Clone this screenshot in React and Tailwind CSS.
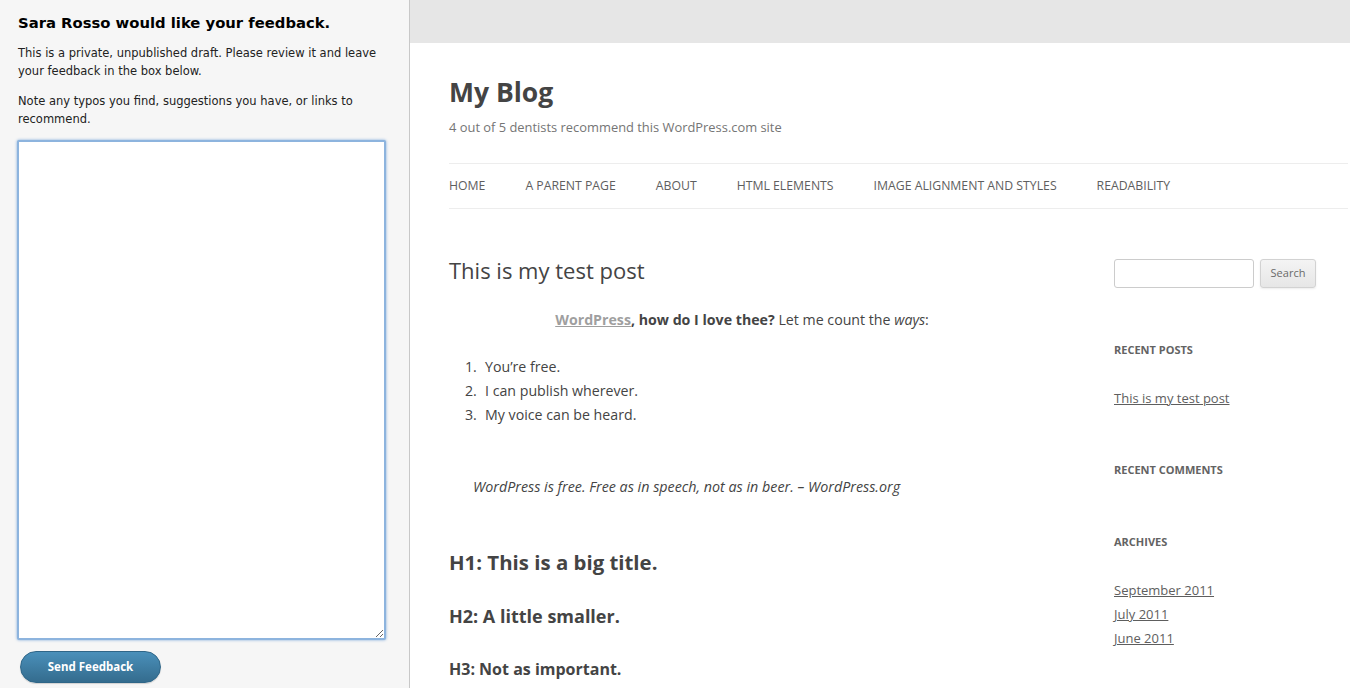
import React from 'react';

const navItems = ['Home', 'A Parent Page', 'About', 'HTML Elements', 'Image Alignment and Styles', 'Readability'];
const archives = ['September 2011', 'July 2011', 'June 2011'];

function FeedbackPanel() {
    return (
        <aside className="w-[410px] shrink-0 h-full bg-[#f6f6f6] border-r border-[#c8c8c8] flex flex-col text-black" style={{ fontFamily: '"DejaVu Sans", Verdana, sans-serif' }}>
            <div className="pl-[18px] pr-4 pt-[12px]">
                <h2 className="text-[14.8px] font-bold leading-[22px]">Sara Rosso would like your feedback.</h2>
                <p className="mt-[10px] text-[11.5px] leading-[18px] text-[#222]">This is a private, unpublished draft. Please review it and leave your feedback in the box below.</p>
                <p className="mt-[12px] text-[11.5px] leading-[18px] text-[#222]">Note any typos you find, suggestions you have, or links to recommend.</p>
            </div>
            <div className="pl-[17px] pr-[23px] mt-[12px]">
                <textarea className="block w-full h-[500px] bg-white border-2 border-[#8db4de] rounded-[2px] shadow-[0_0_3px_#7aa7d9] outline-none resize" />
            </div>
            <div className="pl-[20px] mt-[11px]">
                <button className="w-[141px] h-[32px] rounded-full bg-gradient-to-b from-[#4a90ba] to-[#346c8e] border border-[#2f6688] text-white text-[11.5px] font-bold shadow-[0_1px_1px_rgba(0,0,0,0.15)]" style={{ fontFamily: '"Noto Sans", "Open Sans", sans-serif' }}>
                    Send Feedback
                </button>
            </div>
        </aside>
    );
}

function Sidebar() {
    return (
        <div className="w-[236px] shrink-0 pt-[50px]">
            <div className="flex gap-[6px]">
                <input className="w-[140px] h-[29px] border border-[#ccc] rounded-[3px] bg-white" />
                <button className="w-[56px] h-[29px] border border-[#d2d2d2] rounded-[3px] bg-gradient-to-b from-[#f4f4f4] to-[#e6e6e6] text-[11px] text-[#6a6a6a] shadow-[0_1px_2px_rgba(64,64,64,0.1)]">Search</button>
            </div>
            <h3 className="mt-[53px] text-[11px] font-bold uppercase text-[#636363] leading-[18px]">Recent Posts</h3>
            <ul className="mt-[27px] text-[13px] leading-[24px]">
                <li><a className="underline text-[#5e5e5e]">This is my test post</a></li>
            </ul>
            <h3 className="mt-[51px] text-[11px] font-bold uppercase text-[#636363] leading-[18px]">Recent Comments</h3>
            <h3 className="mt-[54px] text-[11px] font-bold uppercase text-[#636363] leading-[18px]">Archives</h3>
            <ul className="mt-[27px] text-[13px] leading-[24px]">
                {archives.map(a => (
                    <li key={a}><a className="underline text-[#5e5e5e]">{a}</a></li>
                ))}
            </ul>
        </div>
    );
}

function BlogPreview() {
    return (
        <main className="flex-1 h-full overflow-hidden bg-white flex flex-col" style={{ fontFamily: '"Open Sans", "Noto Sans", sans-serif' }}>
            <div className="h-[43px] shrink-0 bg-[#e6e6e6]" />
            <div className="pl-[39px] pr-[2px]">
                {/* Header */}
                <h1 className="mt-[31px] text-[26.5px] font-bold leading-[36px] text-[#444]">My Blog</h1>
                <p className="mt-[7px] text-[12.9px] leading-[20px] text-[#757575]">4 out of 5 dentists recommend this WordPress.com site</p>

                {/* Nav */}
                <nav className="mt-[26px] border-t border-b border-[#ededed] h-[46px] flex items-center gap-[40px]">
                    {navItems.map(item => (
                        <a key={item} className="text-[12.25px] uppercase text-[#5e5e5e] leading-none">{item}</a>
                    ))}
                </nav>

                <div className="flex">
                    {/* Post */}
                    <article className="w-[665px] shrink-0 pt-[46px] text-[#444]">
                        <h2 className="text-[22px] leading-[30px] font-normal text-[#444]">This is my test post</h2>
                        <div className="w-[586px]">
                            <p className="mt-[23px] text-[14.2px] leading-[24px] text-center">
                                <a className="underline font-bold text-[#9f9f9f]">WordPress</a><strong>, how do I love thee?</strong> Let me count the <em>ways</em>:
                            </p>
                            <ol className="mt-[23px] pl-[16px] text-[14.2px] leading-[24px] list-none">
                                <li><span className="inline-block w-[20px]">1.</span>You’re free.</li>
                                <li><span className="inline-block w-[20px]">2.</span>I can publish wherever.</li>
                                <li><span className="inline-block w-[20px]">3.</span>My voice can be heard.</li>
                            </ol>
                            <blockquote className="mt-[48px] pl-[24px] text-[14.3px] leading-[24px] italic">
                                WordPress is free. Free as in speech, not as in beer. – WordPress.org
                            </blockquote>
                            <h2 className="mt-[48px] text-[20.4px] font-bold leading-[30px] text-[#444]">H1: This is a big title.</h2>
                            <h2 className="mt-[24px] text-[18px] font-bold leading-[30px] text-[#444]">H2: A little smaller.</h2>
                            <h3 className="mt-[23px] text-[16px] font-bold leading-[30px] text-[#444]">H3: Not as important.</h3>
                        </div>
                    </article>
                    <Sidebar />
                </div>
            </div>
        </main>
    );
}

export default function App() {
    return (
        <div className="w-[1350px] h-[688px] flex overflow-hidden">
            <FeedbackPanel />
            <BlogPreview />
        </div>
    );
}
